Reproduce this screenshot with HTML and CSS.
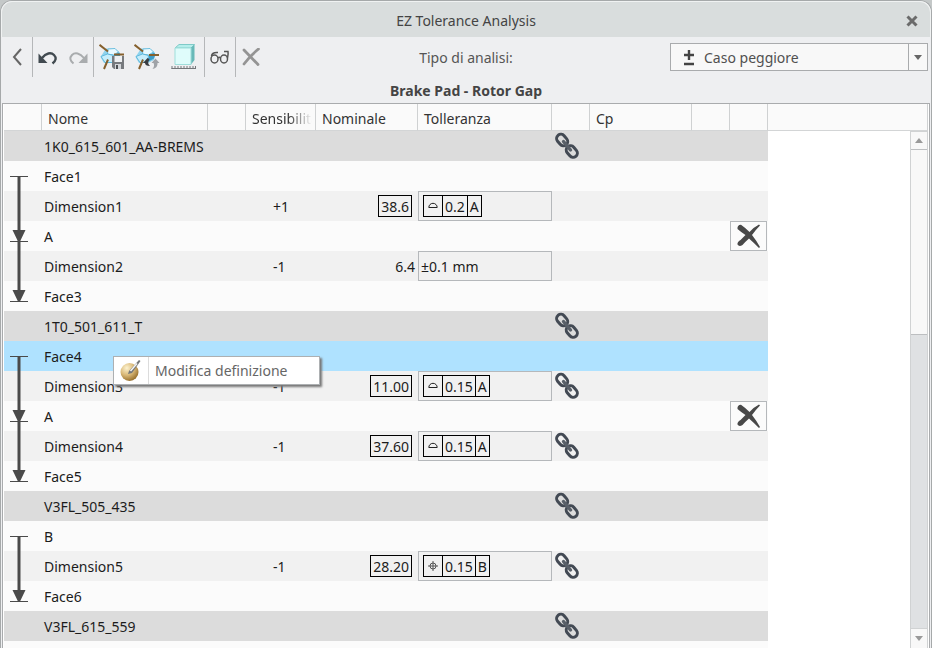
FILE: index.html
```html
<!DOCTYPE html>
<html lang="it">
<head>
<meta charset="utf-8">
<title>EZ Tolerance Analysis</title>
<link rel="stylesheet" href="styles.css">
</head>
<body>
<svg class="defs" width="0" height="0" aria-hidden="true">
  <defs>
    <radialGradient id="ball" cx="35%" cy="28%" r="80%">
      <stop offset="0" stop-color="#fdf3d0"/><stop offset=".5" stop-color="#d9b877"/><stop offset="1" stop-color="#8d6420"/>
    </radialGradient>
    <symbol id="link" viewBox="0 0 26 28">
      <g fill="none" stroke="#434a54" stroke-width="3">
        <rect x="-4" y="-6" width="8.500" height="12.500" rx="4.200" transform="translate(7.800 8) rotate(-40)"/>
        <rect x="-4.200" y="-6.300" width="8.500" height="12.500" rx="4.200" transform="translate(17.800 19.600) rotate(-40)"/>
        <path d="M9.500 9.500l7 8.500" stroke="#596069" stroke-width="3.400" stroke-linecap="round"/>
      </g>
    </symbol>
    <symbol id="cross" viewBox="0 0 24 24">
      <path fill="#484848" d="M.5 5Q0 1 4 .8 8.500 4 12.500 8 17 3 22 .5L23 1.500Q18.500 6 15 11 19 16 23 23L22 24Q17 19 12 14.500 8 18 5.500 21 2 23 .5 20.500 0 18 3.500 16L8.500 11Q4.500 8.500 .5 5z"/>
    </symbol>
    <symbol id="profile" viewBox="0 0 10 12">
      <path d="M.8 7.500a4.200 4.200 0 0 1 8.400 0z" fill="none" stroke="#222"/>
    </symbol>
    <symbol id="position" viewBox="0 0 10 12">
      <path d="M5 1v10M0 6h10" stroke="#555"/><circle cx="5" cy="6" r="3" fill="none" stroke="#555"/>
    </symbol>
    <symbol id="dim-start" viewBox="0 0 38 30">
      <path fill="#4a4a4a" d="M6 15h18v1H6zM13.500 15h3v15h-3z"/>
    </symbol>
    <symbol id="dim-line" viewBox="0 0 38 30"><path fill="#4a4a4a" d="M13.500 0h3v30h-3z"/></symbol>
    <symbol id="dim-end" viewBox="0 0 38 30">
      <path fill="#4a4a4a" d="M13.500 0h3v12h-3zM8.500 9h13l-5.500 11.500h-2zM6 20h18v1H6z"/>
    </symbol>
    <symbol id="dim-both" viewBox="0 0 38 30">
      <path fill="#4a4a4a" d="M13.500 0h3v30h-3zM8.500 9h13l-5.500 11.500h-2zM6 20h18v1H6z"/>
    </symbol>
    <symbol id="model" viewBox="0 0 26 26">
      <path d="M7 4.500h9L21 9l-1 7-6 3H5L1.500 13z" fill="#8fd3ee"/>
      <path d="M9 5l7-.5 3.500 3.500-5 3-6-1z" fill="#eafaff" stroke="#58b4d8" stroke-width=".8"/>
      <path d="M2 12.500l6.500-2.500 6 1.500-1 7H6z" fill="#c6edfb" stroke="#4daed5" stroke-width=".8"/>
      <path d="M15 11.500l5-3 1.500 2-1.500 4-5.500 3z" fill="#3c9dc8"/>
      <path d="M.5.8L9 7.500M9 15.500L5 25" stroke="#85602d" stroke-width="2"/>
    </symbol>
  </defs>
</svg>

<main class="window">
  <header class="titlebar">
    <h1>EZ Tolerance Analysis</h1>
    <button class="close" type="button" aria-label="Chiudi">
      <svg width="12" height="12" viewBox="0 0 12 12"><path d="M1.500 1.500l9 9M10.500 1.500l-9 9" stroke="#6b6b6b" stroke-width="3"/></svg>
    </button>
  </header>

  <section class="toolbar">
    <nav class="tools" aria-label="Strumenti">
      <div class="group">
        <button type="button" aria-label="Indietro"><svg width="12" height="18" viewBox="0 0 12 18"><path d="M10 1L3 9l7 8" fill="none" stroke="#666" stroke-width="2"/></svg></button>
      </div>
      <div class="group">
        <button type="button" aria-label="Annulla"><svg width="20" height="16" viewBox="0 0 20 16"><path d="M4 9C8 4 13 3 16 6q4 4-1.500 8.500" fill="none" stroke="#414a50" stroke-width="2.400"/><path d="M.5 4.500V14h9z" fill="#414a50"/></svg></button>
        <button type="button" aria-label="Ripristina"><svg width="20" height="16" viewBox="0 0 20 16"><path d="M16 9C12 4 7 3 4 6q-4 4 1.500 8.500" fill="none" stroke="#a9acae" stroke-width="2"/><path d="M19.500 4.500V14h-9z" fill="#a9acae"/></svg></button>
      </div>
      <div class="group">
        <button class="wide" type="button" aria-label="Salva analisi"><svg width="26" height="26" viewBox="0 0 26 26"><use href="#model"/><path d="M15 10.500h10" stroke="#85602d" stroke-width="2"/><path d="M13 12h12v13H15l-2-2z" fill="#777a7e"/><path d="M15.500 12h7.500v6h-7.500z" fill="#eef0f2"/><path d="M16 20h6v5h-6z" fill="#d3d6da"/><path d="M17 21h2v4h-2z" fill="#4c4f53"/></svg></button>
        <button class="wide" type="button" aria-label="Aggiorna analisi"><svg width="26" height="26" viewBox="0 0 26 26"><use href="#model"/><path d="M15 11h10" stroke="#85602d" stroke-width="2"/><path d="M9 19l4.500-5 2 1-1 2.500q-1 2 1.500 4.500-5 0-5-3z" fill="#393d42"/><path d="M17.500 19l4-4.500 4 4.500h-2q.5 5-5 6 2.500-3 1-6z" fill="#9fa3a8"/></svg></button>
        <button class="wide last" type="button" aria-label="Misura"><svg width="26" height="26" viewBox="0 0 26 26"><path d="M4 4l4-3.500h15.500L20 4z" fill="#b5eeeb" stroke="#7fcac8"/><path d="M20 4l3.500-3.500V16L20 20.500z" fill="#68b9b8"/><path d="M4 4h16v16.500H4z" fill="#dffcfb" stroke="#9fdedb"/><path d="M.5 24.500h24M1 22v3M4 22v3M7 22v3M10 22v3M13 22v3M16 22v3M19 22v3M22 22v3M24.500 22v3" stroke="#74777a" fill="none"/></svg></button>
      </div>
      <div class="group">
        <button type="button" aria-label="Anteprima"><svg width="20" height="16" viewBox="0 0 20 16"><g fill="none" stroke="#555" stroke-width="1.500"><ellipse cx="4.500" cy="10" rx="3.500" ry="4"/><ellipse cx="14" cy="10" rx="3.500" ry="4"/><path d="M8 9q1.200-1.500 2.500 0M1.500 7Q2 3 8 3.500M17.500 9q1-4 .5-6.500h-4"/></g></svg></button>
      </div>
      <div class="group">
        <button type="button" aria-label="Elimina"><svg width="18" height="18" viewBox="0 0 18 18"><path d="M2 2l14 14.500M16.500 1Q9 7 2 16" fill="none" stroke="#949494" stroke-width="2.800" stroke-linecap="round"/></svg></button>
      </div>
    </nav>
    <label for="kind">Tipo di analisi:</label>
    <div class="combo">
      <svg class="plusminus" width="12" height="16" viewBox="0 0 12 16"><path d="M6 0v10M1 5h10M1 14h10" stroke="#444" stroke-width="2.400"/></svg>
      <select id="kind"><option>Caso peggiore</option></select>
      <span class="drop"><svg width="8" height="5" viewBox="0 0 8 5"><path d="M0 0h8L4 5z" fill="#666"/></svg></span>
    </div>
  </section>

  <h2>Brake Pad - Rotor Gap</h2>

  <section class="panel">
    <table>
      <colgroup>
        <col class="c38"><col class="c166"><col class="c38"><col class="c70"><col class="c102"><col class="c134"><col class="c38"><col class="c102"><col class="c38"><col class="c38"><col>
      </colgroup>
      <thead>
        <tr><th></th><th>Nome</th><th></th><th><span class="fade">Sensibilità</span></th><th>Nominale</th><th>Tolleranza</th><th></th><th>Cp</th><th></th><th></th><th></th></tr>
      </thead>
      <tbody>
        <tr class="part"><td></td><td colspan="5">1K0_615_601_AA-BREMS</td><td><svg class="link"><use href="#link"/></svg></td><td colspan="3"></td></tr>
        <tr><td><svg class="dim"><use href="#dim-start"/></svg></td><td colspan="9">Face1</td></tr>
        <tr class="alt"><td><svg class="dim"><use href="#dim-line"/></svg></td><td>Dimension1</td><td></td><td class="sens">+1</td><td class="num"><span class="basic">38.6</span></td><td><button class="tol" type="button"><span class="frame"><i><svg class="sym"><use href="#profile"/></svg></i><i>0.2</i><i>A</i></span></button></td><td colspan="4"></td></tr>
        <tr><td><svg class="dim"><use href="#dim-both"/></svg></td><td colspan="8">A</td><td><button class="remove" type="button" aria-label="Rimuovi"><svg><use href="#cross"/></svg></button></td></tr>
        <tr class="alt"><td><svg class="dim"><use href="#dim-line"/></svg></td><td>Dimension2</td><td></td><td class="sens">-1</td><td class="num">6.4</td><td><button class="tol plain" type="button">±0.1 mm</button></td><td colspan="4"></td></tr>
        <tr><td><svg class="dim"><use href="#dim-end"/></svg></td><td colspan="9">Face3</td></tr>
        <tr class="part"><td></td><td colspan="5">1T0_501_611_T</td><td><svg class="link"><use href="#link"/></svg></td><td colspan="3"></td></tr>
        <tr class="selected"><td><svg class="dim"><use href="#dim-start"/></svg></td><td class="anchor" colspan="9">Face4
          <div class="menu"><button type="button"><span class="menu-icon"><svg width="22" height="24" viewBox="0 0 22 24"><circle cx="9.500" cy="13" r="9" fill="url(#ball)"/><path d="M9 12L19 1l1.500 1L12 14l-4 1z" fill="#74777a"/><path d="M10.500 12l6.500-7.500" stroke="#f5f5f5" stroke-width="1.500"/></svg></span><span class="menu-text">Modifica definizione</span></button></div></td></tr>
        <tr class="alt"><td><svg class="dim"><use href="#dim-line"/></svg></td><td>Dimension3</td><td></td><td class="sens">-1</td><td class="num"><span class="basic">11.00</span></td><td><button class="tol" type="button"><span class="frame"><i><svg class="sym"><use href="#profile"/></svg></i><i>0.15</i><i>A</i></span></button></td><td><svg class="link"><use href="#link"/></svg></td><td colspan="3"></td></tr>
        <tr><td><svg class="dim"><use href="#dim-both"/></svg></td><td colspan="8">A</td><td><button class="remove" type="button" aria-label="Rimuovi"><svg><use href="#cross"/></svg></button></td></tr>
        <tr class="alt"><td><svg class="dim"><use href="#dim-line"/></svg></td><td>Dimension4</td><td></td><td class="sens">-1</td><td class="num"><span class="basic">37.60</span></td><td><button class="tol" type="button"><span class="frame"><i><svg class="sym"><use href="#profile"/></svg></i><i>0.15</i><i>A</i></span></button></td><td><svg class="link"><use href="#link"/></svg></td><td colspan="3"></td></tr>
        <tr><td><svg class="dim"><use href="#dim-end"/></svg></td><td colspan="9">Face5</td></tr>
        <tr class="part"><td></td><td colspan="5">V3FL_505_435</td><td><svg class="link"><use href="#link"/></svg></td><td colspan="3"></td></tr>
        <tr><td><svg class="dim"><use href="#dim-start"/></svg></td><td colspan="9">B</td></tr>
        <tr class="alt"><td><svg class="dim"><use href="#dim-line"/></svg></td><td>Dimension5</td><td></td><td class="sens">-1</td><td class="num"><span class="basic">28.20</span></td><td><button class="tol" type="button"><span class="frame"><i><svg class="sym"><use href="#position"/></svg></i><i>0.15</i><i>B</i></span></button></td><td><svg class="link"><use href="#link"/></svg></td><td colspan="3"></td></tr>
        <tr><td><svg class="dim"><use href="#dim-end"/></svg></td><td colspan="9">Face6</td></tr>
        <tr class="part"><td></td><td colspan="5">V3FL_615_559</td><td><svg class="link"><use href="#link"/></svg></td><td colspan="3"></td></tr>
        <tr><td></td><td colspan="9"></td></tr>
      </tbody>
    </table>
    <div class="scroll" aria-hidden="true">
      <span class="arrow"><svg width="8" height="5" viewBox="0 0 8 5"><path d="M0 5h8L4 0z" fill="#999"/></svg></span>
      <span class="thumb"></span>
      <span class="track"></span>
      <span class="arrow down"><svg width="8" height="5" viewBox="0 0 8 5"><path d="M0 0h8L4 5z" fill="#999"/></svg></span>
    </div>
  </section>
</main>
</body>
</html>
```
FILE: styles.css
```css
* { box-sizing: border-box; }

html, body { height: 100%; margin: 0; }

body {
  background: #c4c8c8;
  color: #1c1c1c;
  font: 14px/20px "Noto Sans", "Open Sans", sans-serif;
  overflow: hidden;
}

svg { display: block; }
.defs { position: absolute; }

button {
  margin: 0;
  padding: 0;
  border: 0;
  background: none;
  color: inherit;
  font: inherit;
}

.window {
  display: flex;
  flex-direction: column;
  height: 100vh;
  border: 1px solid #a6a9aa;
  border-bottom: 0;
  border-radius: 12px 12px 0 0;
  background: #eeeff1;
  overflow: hidden;
}

.titlebar {
  display: grid;
  grid-template-columns: 1fr auto 1fr;
  align-items: center;
  flex: none;
  height: 36px;
  padding-top: 2px;
  border: 1px solid #f0f2f2;
  border-bottom: 0;
  border-radius: 11px 11px 0 0;
  background: #d9dddd;
}

h1, h2 { margin: 0; color: #444; font-size: 14px; line-height: 20px; }
h1 { grid-column: 2; font-weight: 400; }
.close { justify-self: end; margin-right: 12px; }

.toolbar {
  display: grid;
  grid-template-columns: 1fr auto 1fr;
  flex: none;
  height: 40px;
  align-items: center;
  color: #555;
}

.toolbar label { padding-top: 2px; }
.tools { display: flex; height: 40px; }
.group { display: flex; border-right: 1px solid #b5b7b9; }
.group:last-child { border-right: 0; }
.group button { display: grid; place-items: center; width: 30px; }
.group .wide { width: 35px; }
.group .last { width: 40px; }
.group:first-child button { width: 31px; }

.combo {
  position: relative;
  display: flex;
  justify-self: end;
  width: 258px;
  max-width: 100%;
  height: 28px;
  margin-right: 3px;
  border: 1px solid #a9abad;
  background: #f8f8f8;
}

.combo select {
  flex: 1;
  padding: 2px 0 0 33px;
  border: 0;
  background: none;
  color: #505050;
  font: inherit;
  appearance: none;
}

.plusminus { position: absolute; left: 12px; top: 6px; }
.drop { display: grid; place-items: center; width: 19px; border-left: 1px solid #a9abad; }

h2 { flex: none; height: 26px; padding-top: 4px; text-align: center; }

.panel {
  display: grid;
  flex: 1;
  min-height: 0;
  margin: 0 1px;
  padding: 0 1px;
  border: 1px solid #a9abad;
  border-bottom: 0;
  background: #fff;
  overflow: hidden;
}

table {
  grid-area: 1 / 1;
  align-self: start;
  width: 100%;
  border-collapse: separate;
  border-spacing: 0;
  table-layout: fixed;
}

.c38 { width: 38px; }
.c70 { width: 70px; }
.c102 { width: 102px; }
.c134 { width: 134px; }
.c166 { width: 166px; }

th {
  height: 27px;
  padding: 3px 0 0 6px;
  border-right: 1px solid #cfd1d2;
  border-bottom: 1px solid #d3d5d6;
  background: #fafafa;
  color: #333;
  font-weight: 400;
  text-align: left;
  white-space: nowrap;
}

.fade {
  display: block;
  width: 60px;
  overflow: hidden;
  mask-image: linear-gradient(to right, #000 60%, transparent);
}

td { height: 30px; padding: 2px 0 0 2px; background: #fbfbfb; white-space: nowrap; }
td:has(.link) { padding-top: 0; }
td:first-child { padding: 0; }
.alt td { background: #f1f1f1; }
.part td { background: #dcdcdc; }
.selected td { background: #afe2ff; }

.dim { width: 38px; height: 30px; }
.link { width: 26px; height: 28px; }
td.sens { padding-left: 27px; }
td.num { padding-right: 3px; text-align: right; }
td.num:has(.basic) { padding-top: 0; }

.basic {
  display: inline-block;
  margin-right: 3px;
  padding: 1px 2px 0;
  border: 1px solid #000;
  line-height: 19px;
}

td:has(button.tol), td:has(button.remove) { padding: 0; }
td.anchor { position: relative; }

.tol {
  display: flex;
  align-items: center;
  width: 134px;
  height: 30px;
  padding-left: 4px;
  border: 1px solid #b5b8bb;
}

.plain { padding: 2px 0 0 2px; }
.frame { display: flex; border: 1px solid #000; }
.frame i { display: flex; align-items: center; height: 20px; padding: 1px 2px 0; font-style: normal; }
.frame i + i { border-left: 1px solid #000; }
.frame i:first-child { padding: 0 4px; }
.sym { width: 10px; height: 12px; }

.remove {
  display: grid;
  place-items: center;
  width: 37px;
  height: 30px;
  border: 1px solid #b5b8bb;
}

.remove svg { width: 24px; height: 24px; }

.menu {
  position: absolute;
  left: 71px;
  top: 15px;
  z-index: 1;
  border: 1px solid #adb0b2;
  background: #fff;
  box-shadow: 2px 2px 2px #777;
}

.menu button { display: flex; align-items: center; width: 205px; height: 27px; color: #666; }
.menu-icon { display: grid; place-items: center; width: 35px; height: 27px; border-right: 1px solid #dcdcdc; }
.menu-text { padding-left: 6px; }

.scroll {
  grid-area: 1 / 1;
  justify-self: end;
  display: flex;
  flex-direction: column;
  width: 18px;
  min-height: 0;
  margin-top: 27px;
  border: 1px solid #d0d2d3;
  border-bottom: 0;
  background: #dfe1e3;
}

.arrow { display: grid; place-items: center; flex: none; height: 17px; background: #f8f8f8; }
.down { border-top: 1px solid #d0d2d3; height: 20px; }
.thumb { flex: 0 0 36%; border: 1px solid #bcbec0; border-width: 1px 0; background: #f8f8f8; }
.track { flex: 1; }

.panel { grid-template-rows: minmax(0, 1fr); }
```
